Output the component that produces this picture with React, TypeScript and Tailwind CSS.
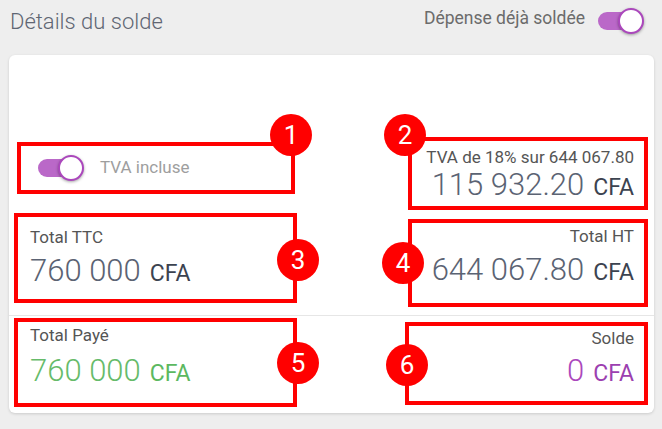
import { FC, ReactNode } from 'react';

interface BadgeProps {
  n: number;
  pos: string;
}

const Badge: FC<BadgeProps> = ({ n, pos }) => (
  <span
    className={`absolute ${pos} flex items-center justify-center w-[42px] h-[42px] rounded-full bg-[#ff0000] text-white text-[26px] leading-none`}
  >
    {n}
  </span>
);

const Toggle: FC = () => (
  <div className="relative w-[45px] h-[26px] shrink-0">
    <div className="absolute left-0 top-[4px] w-[36px] h-[18px] rounded-full bg-[#ba68c8]" />
    <div className="absolute left-[20px] top-0 w-[26px] h-[26px] rounded-full bg-white border-2 border-[#ab47bc] shadow-[0_1px_3px_rgba(0,0,0,0.35)]" />
  </div>
);

interface AmountProps {
  value: string;
  color: string;
  unitColor: string;
}

const Amount: FC<AmountProps> = ({ value, color, unitColor }) => (
  <div className="leading-[36px] whitespace-nowrap">
    <span className={`text-[31px] font-light ${color}`}>{value}</span>
    <span className={`ml-[9px] text-[23px] ${unitColor}`}>CFA</span>
  </div>
);

interface BoxProps {
  className: string;
  children: ReactNode;
}

const Box: FC<BoxProps> = ({ className, children }) => (
  <div className={`relative border-4 border-[#ff0000] ${className}`}>{children}</div>
);

export default function App() {
  return (
    <div className="w-[662px] h-[429px] bg-[#eeeeee] font-['Roboto',sans-serif] overflow-hidden">
      <div className="flex justify-between h-[55px]">
        <h1 className="pl-[10px] pt-[8px] text-[22px] leading-[28px] font-light text-[#5f6673]">
          Détails du solde
        </h1>
        <div className="flex items-start gap-[13px] pt-[8px] pr-[19px]">
          <span className="text-[17.5px] leading-[20px] text-[#6b6b6b]">Dépense déjà soldée</span>
          <Toggle />
        </div>
      </div>

      <div className="ml-[9px] mr-[8px] h-[358px] rounded-[6px] bg-white shadow-[0_1px_3px_rgba(0,0,0,0.15)]">
        <div className="h-[82px]" />

        <div className="flex justify-between">
          <Box className="ml-[8px] mt-[5px] w-[278px] h-[52px] flex items-center pl-[17px]">
            <Toggle />
            <span className="ml-[17px] text-[17px] text-[#9e9e9e]">TVA incluse</span>
            <Badge n={1} pos="left-[249px] top-[-32px]" />
          </Box>
          <Box className="mr-[6px] w-[240px] h-[73px] pr-[10px] pt-[6px] text-right">
            <div className="text-[17px] leading-[20px] text-[#555555] whitespace-nowrap">
              TVA de 18% sur 644 067.80
            </div>
            <div className="flex justify-end">
              <Amount value="115 932.20" color="text-[#5b6373]" unitColor="text-[#3c4350]" />
            </div>
            <Badge n={2} pos="left-[-28px] top-[-27px]" />
          </Box>
        </div>

        <div className="flex justify-between">
          <Box className="ml-[5px] mt-[3px] w-[283px] h-[90px] pl-[12px] pt-[10px]">
            <div className="text-[17px] leading-[20px] text-[#555555]">Total TTC</div>
            <div className="mt-[6px]">
              <Amount value="760 000" color="text-[#5b6373]" unitColor="text-[#3c4350]" />
            </div>
            <Badge n={3} pos="left-[259px] top-[22px]" />
          </Box>
          <Box className="mr-[6px] mt-[9px] w-[240px] h-[88px] pr-[10px] pt-[3px] text-right">
            <div className="text-[17px] leading-[20px] text-[#555555]">Total HT</div>
            <div className="mt-[6px] flex justify-end">
              <Amount value="644 067.80" color="text-[#5b6373]" unitColor="text-[#3c4350]" />
            </div>
            <Badge n={4} pos="left-[-30px] top-[19px]" />
          </Box>
        </div>

        <div className="mt-[8px] h-px bg-[#e6e6e6]" />

        <div className="flex justify-between">
          <Box className="ml-[5px] mt-[2px] w-[283px] h-[89px] pl-[12px] pt-[3px]">
            <div className="text-[17px] leading-[20px] text-[#555555]">Total Payé</div>
            <div className="mt-[8px]">
              <Amount value="760 000" color="text-[#66bb6a]" unitColor="text-[#5cb860]" />
            </div>
            <Badge n={5} pos="left-[259px] top-[20px]" />
          </Box>
          <Box className="mr-[6px] mt-[6px] w-[243px] h-[83px] pr-[10px] pt-[2px] text-right">
            <div className="text-[17px] leading-[20px] text-[#555555]">Solde</div>
            <div className="mt-[5px] flex justify-end">
              <Amount value="0" color="text-[#ab47bc]" unitColor="text-[#9c3fb0]" />
            </div>
            <Badge n={6} pos="left-[-23px] top-[18px]" />
          </Box>
        </div>
      </div>
    </div>
  );
}
